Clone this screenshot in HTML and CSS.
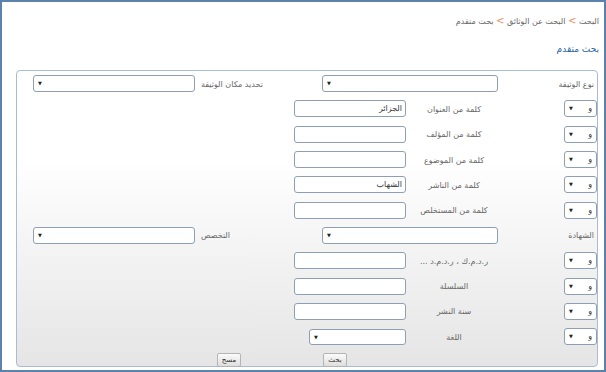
FILE: index.html
```html
<!DOCTYPE html>
<html lang="ar" dir="rtl">
<head>
    <meta charset="UTF-8">
    <meta name="viewport" content="width=device-width, initial-scale=1.0">
    <title>بحث متقدم</title>
    <link rel="stylesheet" href="styles.css">
</head>
<body>
  <div class="pagina">
    <p class="ruta">البحث <span class="sep">&gt;</span> البحث عن الوثائق <span class="sep">&gt;</span> بحث متقدم</p>
    <h1 class="titulo">بحث متقدم</h1>

    <form class="panel">
      <div class="fila">
        <label class="etq etq-dcha">نوع الوثيقة</label>
        <span class="caja grande"><select></select></span>
        <label class="etq etq-izq">تحديد مكان الوثيقة</label>
        <span class="caja ancha"><select></select></span>
      </div>

      <div class="fila">
        <span class="caja op"><select><option>و</option></select></span>
        <label class="etq etq-medio">كلمة من العنوان</label>
        <input type="text" class="texto" value="الجزائر">
      </div>
      <div class="fila">
        <span class="caja op"><select><option>و</option></select></span>
        <label class="etq etq-medio">كلمة من المؤلف</label>
        <input type="text" class="texto">
      </div>
      <div class="fila">
        <span class="caja op"><select><option>و</option></select></span>
        <label class="etq etq-medio">كلمة من الموضوع</label>
        <input type="text" class="texto">
      </div>
      <div class="fila">
        <span class="caja op"><select><option>و</option></select></span>
        <label class="etq etq-medio">كلمة من الناشر</label>
        <input type="text" class="texto" value="الشهاب">
      </div>
      <div class="fila">
        <span class="caja op"><select><option>و</option></select></span>
        <label class="etq etq-medio">كلمة من المستخلص</label>
        <input type="text" class="texto">
      </div>

      <div class="fila">
        <label class="etq etq-dcha">الشهادة</label>
        <span class="caja grande"><select></select></span>
        <label class="etq etq-izq">التخصص</label>
        <span class="caja ancha"><select></select></span>
      </div>

      <div class="fila">
        <span class="caja op"><select><option>و</option></select></span>
        <label class="etq etq-medio">ر.د.م.ك ، ر.د.م.د ...</label>
        <input type="text" class="texto">
      </div>
      <div class="fila">
        <span class="caja op"><select><option>و</option></select></span>
        <label class="etq etq-medio">السلسلة</label>
        <input type="text" class="texto">
      </div>
      <div class="fila">
        <span class="caja op"><select><option>و</option></select></span>
        <label class="etq etq-medio">سنة النشر</label>
        <input type="text" class="texto">
      </div>
      <div class="fila">
        <span class="caja op"><select><option>و</option></select></span>
        <label class="etq etq-medio">اللغة</label>
        <span class="caja idioma"><select></select></span>
      </div>

      <div class="botones">
        <button type="submit" id="buscar">بحث</button>
        <button type="reset" id="borrar">مسح</button>
      </div>
    </form>
  </div>
</body>
</html>
```

FILE: styles.css
```css
* {
    margin: 0;
    padding: 0;
    box-sizing: border-box;
    font-family: "DejaVu Sans", sans-serif;
}

body {
    background-color: #fff;
}

.pagina {
    width: 606px;
    height: 372px;
    border: 2px solid #5b82ad;
    direction: rtl;
}

.ruta {
    padding: 13px 5px 0 0;
    line-height: 12px;
    font-size: 8px;
    color: #666;
}

.sep {
    color: #ea8a62;
    font-size: 10px;
}

.titulo {
    margin-top: 14px;
    padding-right: 5px;
    line-height: 14px;
    font-size: 9px;
    font-weight: normal;
    color: #2a64a8;
}

.panel {
    height: 297px;
    margin: 14px 6px 0 14px;
    padding-top: 0;
    border: 1px solid #a9bdd2;
    border-radius: 4px;
    background: linear-gradient(to bottom, #fff 0%, #fff 30%, #e5e5e5 100%);
}

.fila {
    display: flex;
    align-items: center;
    height: 25.3px;
    line-height: 12px;
}

.etq {
    display: block;
    padding-top: 2px;
    font-size: 8px;
    line-height: 12px;
    color: #666;
    white-space: nowrap;
}

.etq-dcha {
    width: 99px;
    padding-right: 3px;
}

.etq-izq {
    width: 127px;
    padding-left: 6px;
    text-align: left;
}

.etq-medio {
    width: 158px;
    padding-right: 62px;
    text-align: center;
}

/* caja = select con la flecha dibujada encima */
.caja {
    position: relative;
    display: block;
    height: 17px;

    select {
        appearance: none;
        display: block;
        width: 100%;
        height: 100%;
        padding: 0 4px 0 0;
        border: 1px solid #8e9fb3;
        border-radius: 3px;
        background-color: #fff;
        font-size: 8px;
        line-height: 15px;
        color: #333;
    }

    &::after {
        content: "▼";
        position: absolute;
        top: 0;
        left: 5px;
        font-size: 5px;
        line-height: 17px;
        color: #222;
    }
}

.grande {
    width: 176px;
}

.ancha {
    width: 162px;
}

.op {
    width: 33px;
}

.idioma {
    width: 97px;
    height: 16px;

    &::after {
        line-height: 16px;
    }
}

.texto {
    display: block;
    width: 112px;
    height: 17px;
    padding: 0 3px;
    border: 1px solid #8e9fb3;
    border-radius: 3px;
    background-color: #fff;
    font-size: 8px;
    line-height: 15px;
    color: #333;
}

.botones {
    display: flex;
    align-items: center;
    height: 22px;
    padding-right: 250px;
    gap: 82px;
}

button {
    width: 24px;
    height: 14px;
    border: 1px solid #b4b4b4;
    border-radius: 2px;
    background: linear-gradient(to bottom, #fbfbfb, #dedede);
    font-size: 7px;
    line-height: 12px;
    color: #333;
}
```
